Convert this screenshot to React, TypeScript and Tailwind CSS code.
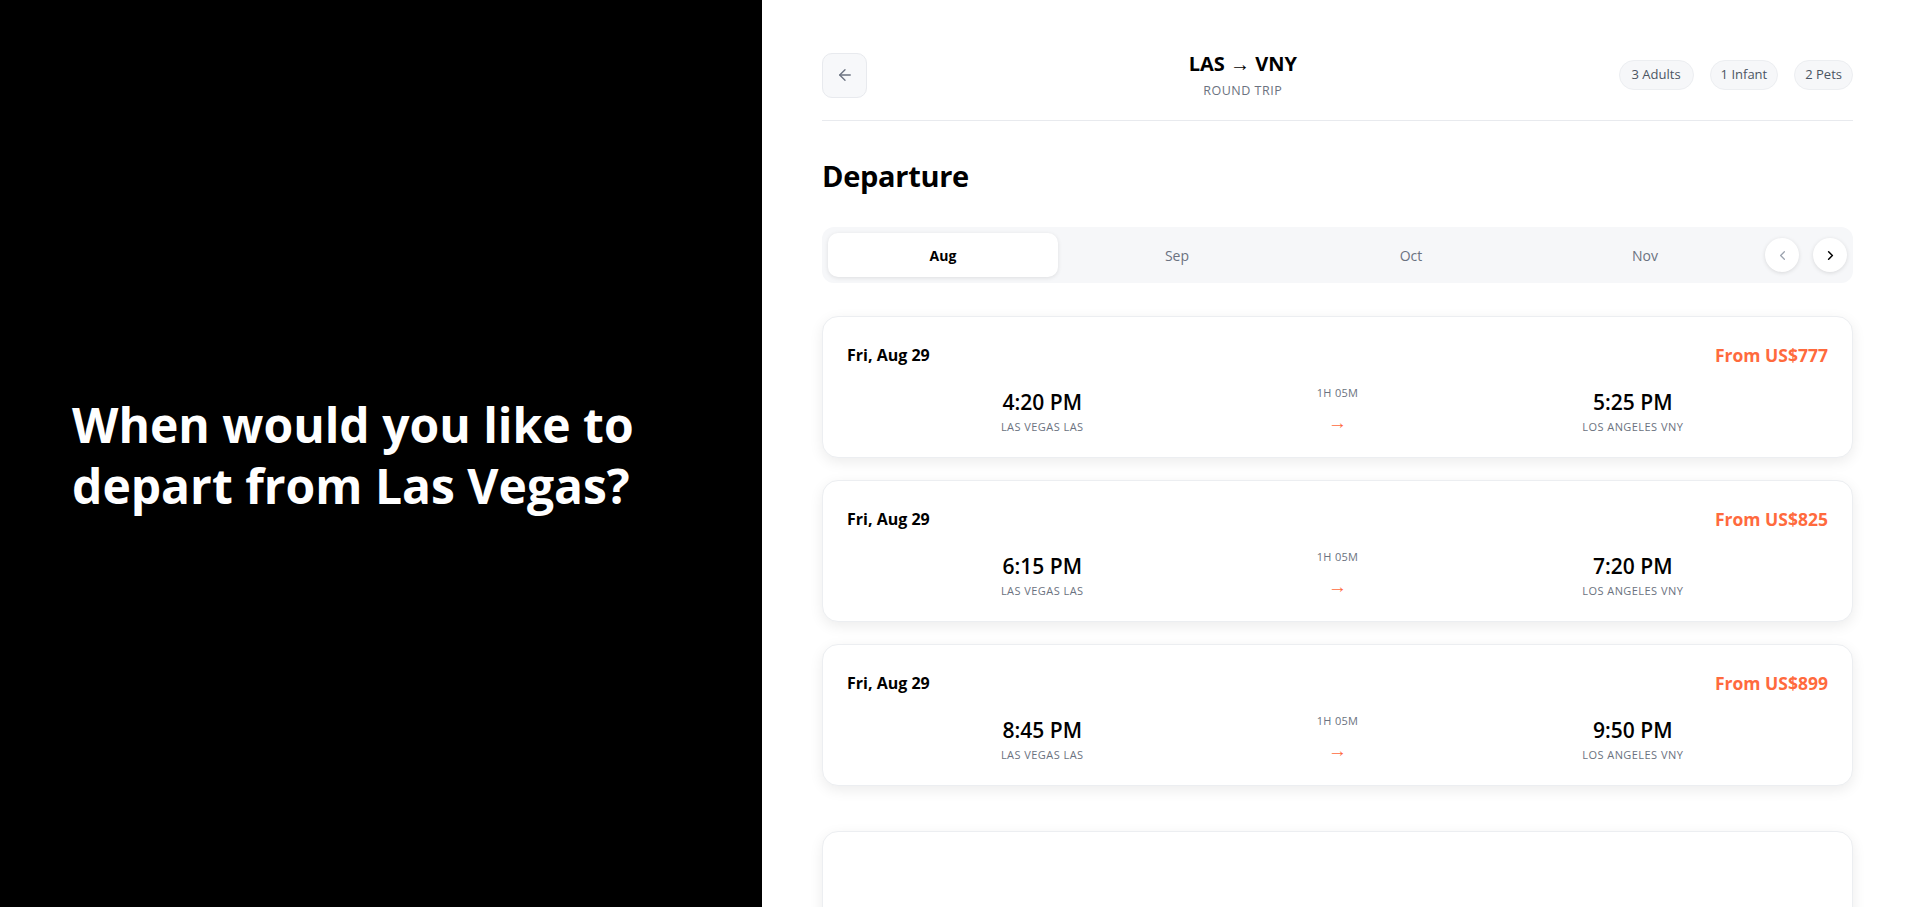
import React from "react";
import { ArrowLeft, ChevronLeft, ChevronRight } from "lucide-react";

const flights = [
  { dep: "4:20 PM", arr: "5:25 PM", price: "From US$777" },
  { dep: "6:15 PM", arr: "7:20 PM", price: "From US$825" },
  { dep: "8:45 PM", arr: "9:50 PM", price: "From US$899" },
];

function FlightCard({ dep, arr, price }: { dep: string; arr: string; price: string }) {
  return (
    <div className="h-[142px] rounded-2xl border border-[#eceef1] bg-white px-6 pt-[25px] shadow-[0_4px_14px_rgba(0,0,0,0.08)]">
      <div className="flex h-[26px] items-center justify-between">
        <span className="text-[16px] font-bold text-black">Fri, Aug 29</span>
        <span className="text-[17.5px] font-bold text-[#ff6a3d]">{price}</span>
      </div>
      <div className="mt-[17px] grid grid-cols-[1fr_200px_1fr] items-start">
        <div className="flex flex-col items-center pt-[3px]">
          <span className="text-[21px] font-semibold leading-7 text-black">{dep}</span>
          <span className="mt-[3px] text-[11px] leading-4 tracking-[0.45px] text-[#6b7280]">LAS VEGAS LAS</span>
        </div>
        <div className="flex flex-col items-center">
          <span className="text-[11px] leading-4 tracking-[0.3px] text-[#6b7280]">1H 05M</span>
          <span className="mt-[9px] text-[19px] leading-6 text-[#ff6a3d]">→</span>
        </div>
        <div className="flex flex-col items-center pt-[3px]">
          <span className="text-[21px] font-semibold leading-7 text-black">{arr}</span>
          <span className="mt-[3px] text-[11px] leading-4 tracking-[0.45px] text-[#6b7280]">LOS ANGELES VNY</span>
        </div>
      </div>
    </div>
  );
}

export default function App() {
  return (
    <div className="flex h-[907px] w-full overflow-hidden font-['Open_Sans',sans-serif]">
      <div className="flex w-[762px] shrink-0 items-center bg-black pl-[72px]">
        <h1 className="whitespace-nowrap pt-[2px] text-[48px] font-bold leading-[61px] text-white">
          When would you like to
          <br />
          depart from Las Vegas?
        </h1>
      </div>
      <div className="flex-1 overflow-hidden bg-white pl-[60px] pr-[56px] pt-[52px]">
        <div className="flex items-center justify-between border-b border-[#e8eaee] pb-[22px]">
          <button className="flex h-[45px] w-[45px] items-center justify-center rounded-[10px] border border-[#e8eaee] bg-[#f7f8fa] text-[#6b7280]">
            <ArrowLeft size={18} strokeWidth={1.8} />
          </button>
          <div className="flex flex-col items-center">
            <span className="text-[20px] font-bold leading-6 text-black">LAS → VNY</span>
            <span className="mt-[8px] text-[12.5px] leading-[14px] tracking-[0.5px] text-[#6b7280]">ROUND TRIP</span>
          </div>
          <div className="flex items-center gap-[16px]">
            <span className="flex h-[30px] items-center rounded-full border border-[#eceef1] bg-[#f6f7f9] px-[12px] text-[13px] text-[#4b5563]">3 Adults</span>
            <span className="flex h-[30px] items-center rounded-full border border-[#eceef1] bg-[#f6f7f9] px-[10px] text-[13px] text-[#4b5563]">1 Infant</span>
            <span className="flex h-[30px] items-center rounded-full border border-[#eceef1] bg-[#f6f7f9] px-[10px] text-[13px] text-[#4b5563]">2 Pets</span>
          </div>
        </div>

        <h2 className="mt-[37px] text-[29px] font-bold leading-9 tracking-[-0.3px] text-black">Departure</h2>

        <div className="mt-[33px] flex h-[56px] items-center gap-1 rounded-xl bg-[#f6f7f9] p-[6px]">
          <div className="flex h-[44px] w-[230px] items-center justify-center rounded-[10px] bg-white text-[14px] font-bold text-black shadow-[0_1px_4px_rgba(0,0,0,0.1)]">Aug</div>
          <div className="flex h-[44px] w-[230px] items-center justify-center text-[14px] text-[#6b7280]">Sep</div>
          <div className="flex h-[44px] w-[230px] items-center justify-center text-[14px] text-[#6b7280]">Oct</div>
          <div className="flex h-[44px] w-[230px] items-center justify-center text-[14px] text-[#6b7280]">Nov</div>
          <div className="ml-[1px] flex items-center gap-[14px]">
            <button className="flex h-[34px] w-[34px] items-center justify-center rounded-full bg-white text-[#9ca3af] shadow-[0_1px_4px_rgba(0,0,0,0.12)]">
              <ChevronLeft size={15} strokeWidth={2} />
            </button>
            <button className="flex h-[34px] w-[34px] items-center justify-center rounded-full bg-white text-black shadow-[0_1px_4px_rgba(0,0,0,0.12)]">
              <ChevronRight size={15} strokeWidth={2.4} />
            </button>
          </div>
        </div>

        <div className="mt-[33px] flex flex-col gap-[22px]">
          {flights.map((f) => (
            <FlightCard key={f.dep} {...f} />
          ))}
        </div>
        <div className="mt-[45px] h-[142px] rounded-2xl border border-[#eceef1] bg-white shadow-[0_4px_14px_rgba(0,0,0,0.08)]" />
      </div>
    </div>
  );
}
